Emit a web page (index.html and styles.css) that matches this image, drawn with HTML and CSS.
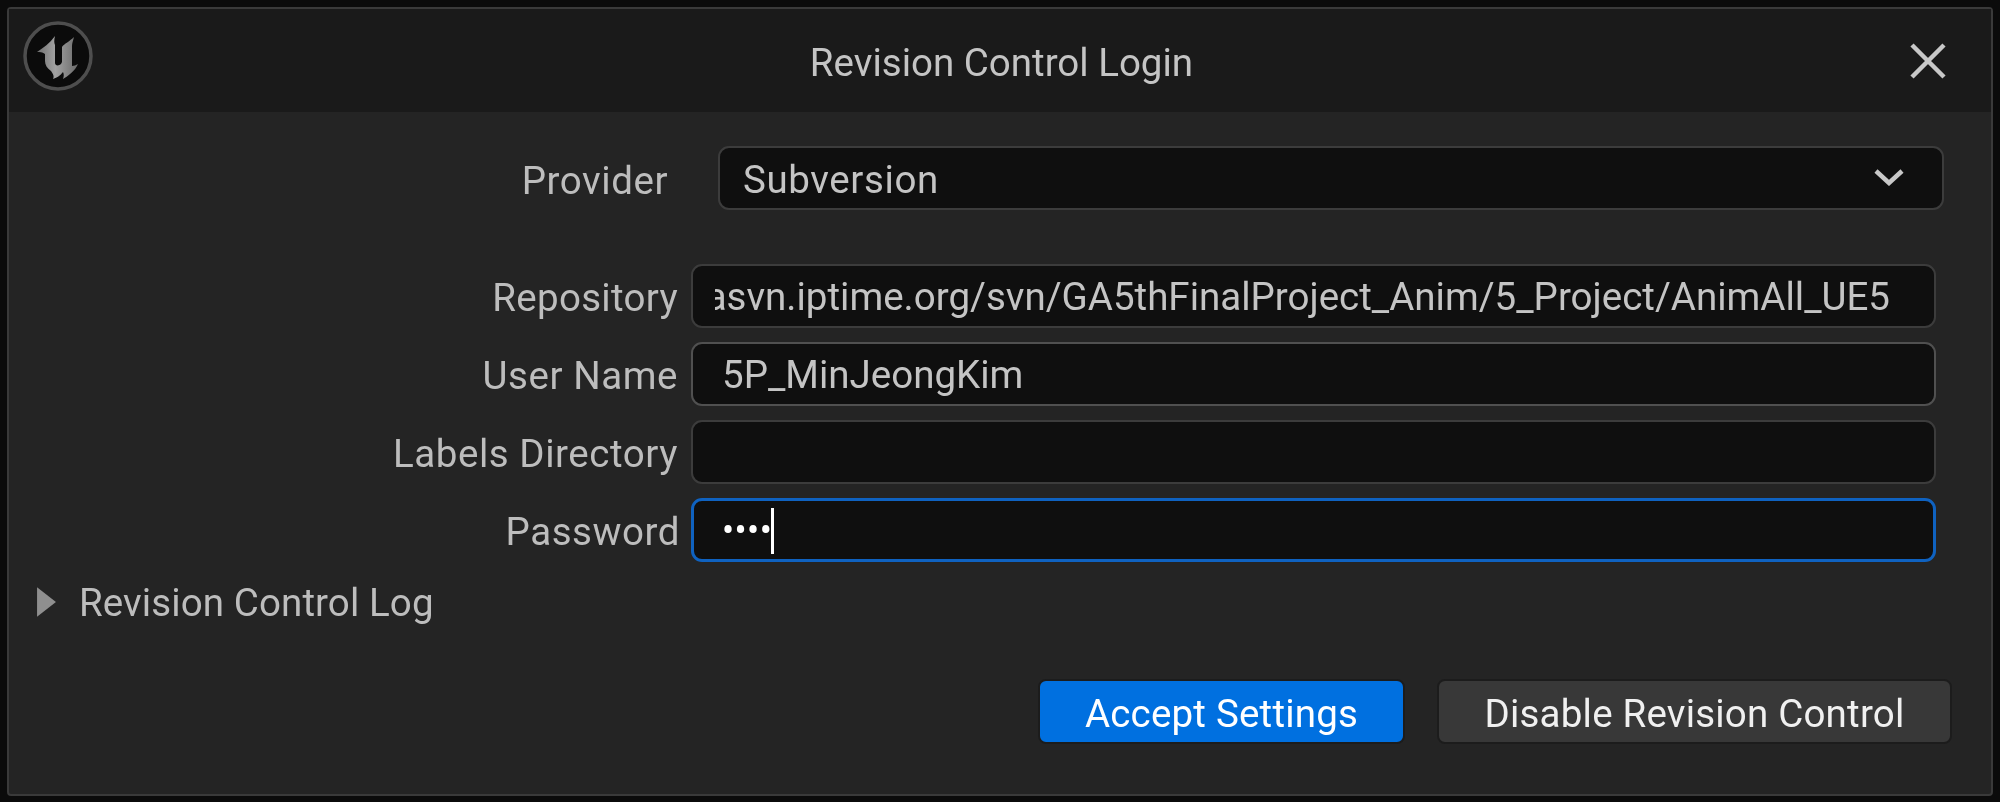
FILE: index.html
```html
<!DOCTYPE html>
<html lang="en">
<head>
<meta charset="utf-8">
<title>Revision Control Login</title>
<link rel="stylesheet" href="styles.css">
</head>
<body>
<div class="window">
  <header class="titlebar">
    <svg class="logo" viewBox="0 0 70 70" aria-hidden="true">
      <defs>
        <linearGradient id="ug" x1="0" y1="0" x2="1" y2="0">
          <stop offset="0" stop-color="#707070"/>
          <stop offset="0.45" stop-color="#a2a2a2"/>
          <stop offset="1" stop-color="#6a6a6a"/>
        </linearGradient>
      </defs>
      <circle cx="35" cy="35" r="33" fill="#0b0b0b" stroke="#4e4e4e" stroke-width="3.5"/>
      <path fill="url(#ug)" d="M14 31C20 27 27 22 32 15C31 19 31 22 32 24L32 42C32 45 36 45 38 43L39 41L39 26C41 23 47 20 51 16C50 20 49 22 49 25L49 45C51 45 53 44 55 43C52 50 45 55 40 58C41 55 41 53 40 51C37 55 33 57 30 58C31 56 31 54 28 50C24 47 22 44 22 40L22 33C19 31 17 31 14 31Z"/>
    </svg>
    <h1 class="title">Revision Control Login</h1>
    <svg class="close" viewBox="0 0 36 36" aria-hidden="true">
      <path d="M2 2L34 34M34 2L2 34"/>
    </svg>
  </header>
  <main class="content">
    <div class="provider-row">
      <span class="label">Provider</span>
      <div class="field dropdown">
        <span class="val">Subversion</span>
        <svg class="chevron" viewBox="0 0 30 18" aria-hidden="true"><path d="M2 3L15 15L28 3"/></svg>
      </div>
    </div>
    <div class="form">
      <div class="row">
        <span class="label repo-label">Repository</span>
        <div class="field repo"><span class="clip"><span>asvn.iptime.org/svn/GA5thFinalProject_Anim/5_Project/AnimAll_UE5</span></span></div>
      </div>
      <div class="row">
        <span class="label">User Name</span>
        <div class="field text bright">5P_MinJeongKim</div>
      </div>
      <div class="row">
        <span class="label">Labels Directory</span>
        <div class="field text"></div>
      </div>
      <div class="row">
        <span class="label pw">Password</span>
        <div class="field text focused"><span class="dots">••••</span><span class="caret"></span></div>
      </div>
    </div>
    <div class="log">
      <svg class="arrow" viewBox="0 0 20 30" aria-hidden="true"><path d="M1 1L19 15L1 29Z"/></svg>
      <span class="log-text">Revision Control Log</span>
    </div>
    <div class="actions">
      <button class="btn primary" type="button">Accept Settings</button>
      <button class="btn" type="button">Disable Revision Control</button>
    </div>
  </main>
</div>
</body>
</html>
```
FILE: styles.css
```css
* { box-sizing: border-box; }
html, body { margin: 0; height: 100%; }
body {
  background: #0b0b0b;
  padding: 7px;
  font-family: Roboto, "Liberation Sans", sans-serif;
  font-size: 38.5px;
  color: #bdbdbd;
  overflow: hidden;
}
.window {
  width: 1986px;
  height: 789px;
  border: 2px solid #3a3a3a;
  border-radius: 4px;
  background: #242424;
  display: flex;
  flex-direction: column;
  filter: blur(0.7px);
}
.titlebar {
  height: 103px;
  background: #1a1a1a;
  display: flex;
  align-items: center;
  padding: 0 45px 0 14px;
  flex: none;
}
.logo { width: 70px; height: 70px; flex: none; margin-top: -9px; }
.title {
  flex: 1;
  margin: 0;
  padding-top: 3px;
  text-align: center;
  font-size: 38.5px;
  font-weight: 400;
  color: #c4c4c4;
}
.close { width: 36px; height: 36px; flex: none; }
.close path { stroke: #c8c8c8; stroke-width: 4.5; fill: none; }
.content { flex: 1; display: flex; flex-direction: column; padding: 34px 0 0; }
.label { white-space: nowrap; text-align: right; letter-spacing: 0.55px; padding-top: 3px; }
.provider-row { display: flex; align-items: center; height: 64px; padding-right: 47px; }
.provider-row .label { width: 659px; margin-right: 50px; padding-top: 4px; }
.field {
  background: #0f0f0f;
  border: 2px solid #3c3c3c;
  border-radius: 11px;
  flex: 1;
  display: flex;
  align-items: center;
  height: 64px;
  color: #c4c4c4;
  min-width: 0;
  padding-top: 1px;
}
.val { letter-spacing: 0.6px; padding-top: 3px; }
.dropdown { justify-content: space-between; padding: 0 38px 0 23px; }
.chevron { width: 30px; height: 18px; margin-top: -2px; }
.chevron path { stroke: #c8c8c8; stroke-width: 4.5; fill: none; }
.form { display: flex; flex-direction: column; gap: 14px; margin-top: 54px; padding-right: 55px; }
.row { display: flex; align-items: center; height: 64px; }
.row .label { width: 669px; margin-right: 13px; }
.row .repo-label { letter-spacing: 0.3px; }
.row .pw { width: 671px; margin-right: 11px; }
.repo { padding: 0 44px 0 22px; }
.clip { flex: 1; overflow: hidden; display: flex; justify-content: flex-end; white-space: nowrap; }
.text { padding-left: 29px; letter-spacing: 0; }
.bright { border-color: #505050; }
.focused { border: 3px solid #0f62c0; padding-left: 28px; }
.dots { color: #fff; font-size: 36px; letter-spacing: 0.4px; }
.caret { width: 3px; height: 46px; background: #fff; margin-left: -1px; }
.log { display: flex; align-items: center; height: 44px; margin-top: 18px; padding-left: 27px; }
.arrow { width: 21px; height: 32px; fill: #8f8f8f; margin-right: 22px; }
.log-text { padding-top: 1px; letter-spacing: 0.1px; }
.actions { display: flex; justify-content: flex-end; gap: 32px; margin-top: 55px; padding-right: 39px; }
.btn {
  height: 65px;
  width: 515px;
  border: 2px solid #1c1c1c;
  border-radius: 8px;
  background: #383838;
  color: #f0f0f0;
  font: inherit;
  letter-spacing: 0.2px;
  padding: 3px 0 0;
}
.primary { width: 367px; background: #0070e0; color: #fff; }
```
